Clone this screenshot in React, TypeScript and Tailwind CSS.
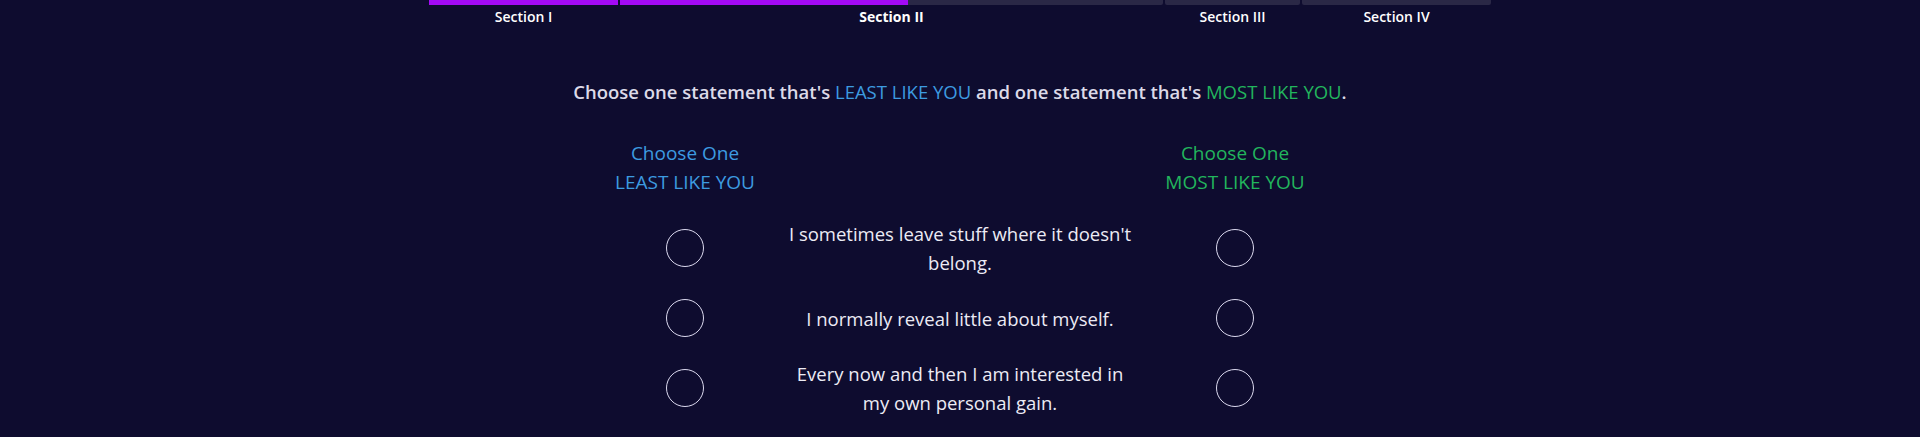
import { useState } from 'react';

const sections = [
  { name: 'Section I', width: 'w-[189px]', fill: 'w-full', active: false },
  { name: 'Section II', width: 'w-[543px]', fill: 'w-[53%]', active: true },
  { name: 'Section III', width: 'w-[135px]', fill: 'w-0', active: false },
  { name: 'Section IV', width: 'w-[189px]', fill: 'w-0', active: false },
];

const statements = [
  "I sometimes leave stuff where it doesn't belong.",
  'I normally reveal little about myself.',
  'Every now and then I am interested in my own personal gain.',
];

function Radio({ checked, onClick }: { checked: boolean; onClick: () => void }) {
  return (
    <button
      type="button"
      onClick={onClick}
      aria-pressed={checked}
      className="w-[38px] h-[38px] rounded-full border-[1.5px] border-[#dcdaf0] flex items-center justify-center"
    >
      {checked && <span className="w-[22px] h-[22px] rounded-full bg-[#dcdaf0]" />}
    </button>
  );
}

export default function App() {
  const [least, setLeast] = useState<number | null>(null);
  const [most, setMost] = useState<number | null>(null);

  return (
    <div
      className="min-h-[437px] w-full bg-[#0e0c2f] text-[#e6e4f2]"
      style={{ fontFamily: '"Open Sans", Lato, sans-serif' }}
    >
      {/* progress */}
      <div className="flex justify-center gap-[2px]">
        {sections.map((s) => (
          <div key={s.name} className={`${s.width} flex flex-col items-center`}>
            <div className="w-full h-[5px] bg-[#2a2846] rounded-b-[2px]">
              <div className={`${s.fill} h-full bg-[#a30af5]`} />
            </div>
            <span
              className={`mt-[2px] text-[14px] leading-5 text-white ${
                s.active ? 'font-bold' : 'font-semibold'
              }`}
            >
              {s.name}
            </span>
          </div>
        ))}
      </div>

      <p className="mt-[51px] text-center text-[18.5px] leading-7 font-semibold text-[#dcdae8]">
        Choose one statement that's <span className="font-normal text-[#3d9be0]">LEAST LIKE YOU</span> and one
        statement that's <span className="font-normal text-[#22b55d]">MOST LIKE YOU</span>.
      </p>

      <div className="mt-[33px] flex justify-center">
        <div className="grid grid-cols-[200px_350px_200px] gap-y-[12px] items-center">
          <div className="mb-[10px] text-center text-[19px] leading-[29px] text-[#3d9be0]">
            <div>Choose One</div>
            <div>LEAST LIKE YOU</div>
          </div>
          <div />
          <div className="mb-[10px] text-center text-[19px] leading-[29px] text-[#22b55d]">
            <div>Choose One</div>
            <div>MOST LIKE YOU</div>
          </div>

          {statements.map((text, i) => (
            <div key={text} className="contents">
              <div className="flex justify-center">
                <Radio checked={least === i} onClick={() => setLeast(i)} />
              </div>
              <p className="text-center text-[18.5px] leading-[29px] text-[#ecebf5] min-h-[58px] flex items-center justify-center">
                {text}
              </p>
              <div className="flex justify-center">
                <Radio checked={most === i} onClick={() => setMost(i)} />
              </div>
            </div>
          ))}
        </div>
      </div>
    </div>
  );
}
